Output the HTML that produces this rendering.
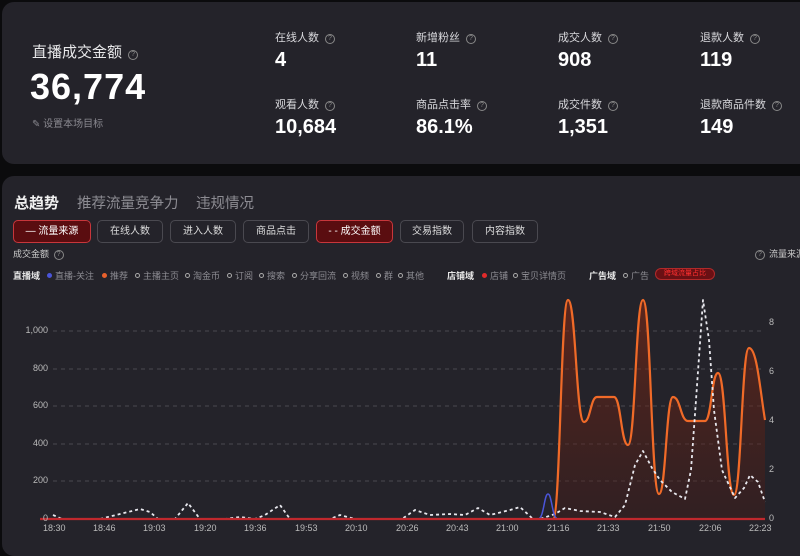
<!DOCTYPE html>
<html><head><meta charset="utf-8"><style>
*{margin:0;padding:0;box-sizing:border-box}
body{width:800px;height:536px;overflow:hidden;background:#0b0b0d;font-family:"Liberation Sans","Noto Sans CJK SC",sans-serif;color:#fff;position:relative}
.card{position:absolute;background:#24232a;border-radius:12px}
.a{position:absolute;white-space:nowrap}
.lbl{font-size:11px;color:#d8d8dc}
.val{font-size:20px;font-weight:bold;color:#fff}
.q{display:inline-block;width:10px;height:10px;border:1px solid #888;border-radius:50%;font-size:7px;line-height:8px;text-align:center;color:#888;margin-left:6px;vertical-align:1px}
.btn{position:absolute;top:220px;height:23px;border:1px solid #4a4950;border-radius:5px;font-size:10px;color:#ddd;text-align:center;line-height:21px;white-space:nowrap}
.btn.on{background:#5a0d10;border-color:#c8363b;color:#fff}
.lg{position:absolute;top:269px;font-size:9px;color:#8d8c93;white-space:nowrap}
.lg b{color:#e8e8e8}
.d{display:inline-block;width:5px;height:5px;border-radius:50%;border:1px solid #aaa;margin-right:3px;vertical-align:1px}
.ax{position:absolute;font-size:9px;color:#bbb}
</style></head><body>
<div class="card" style="left:2px;top:2px;width:810px;height:162px"></div>
<div class="card" style="left:2px;top:176px;width:810px;height:380px"></div>

<div class="a" style="left:32px;top:41px;font-size:15px;color:#e8e8ea">直播成交金额<span class="q">?</span></div>
<div class="a" style="left:30px;top:66px;font-size:36px;font-weight:bold;letter-spacing:1px">36,774</div>
<div class="a" style="left:32px;top:115px;font-size:10px;color:#8a8990">✎ 设置本场目标</div>

<div class="a lbl" style="left:275px;top:29px">在线人数<span class="q">?</span></div>
<div class="a val" style="left:275px;top:49px">4</div>
<div class="a lbl" style="left:275px;top:96px">观看人数<span class="q">?</span></div>
<div class="a val" style="left:275px;top:116px">10,684</div>
<div class="a lbl" style="left:416px;top:29px">新增粉丝<span class="q">?</span></div>
<div class="a val" style="left:416px;top:49px">11</div>
<div class="a lbl" style="left:416px;top:96px">商品点击率<span class="q">?</span></div>
<div class="a val" style="left:416px;top:116px">86.1%</div>
<div class="a lbl" style="left:558px;top:29px">成交人数<span class="q">?</span></div>
<div class="a val" style="left:558px;top:49px">908</div>
<div class="a lbl" style="left:558px;top:96px">成交件数<span class="q">?</span></div>
<div class="a val" style="left:558px;top:116px">1,351</div>
<div class="a lbl" style="left:700px;top:29px">退款人数<span class="q">?</span></div>
<div class="a val" style="left:700px;top:49px">119</div>
<div class="a lbl" style="left:700px;top:96px">退款商品件数<span class="q">?</span></div>
<div class="a val" style="left:700px;top:116px">149</div>

<div class="a" style="left:14px;top:192px;font-size:15px;font-weight:bold;color:#f0f0f0">总趋势</div>
<div class="a" style="left:77px;top:192px;font-size:14.5px;color:#8d8c93">推荐流量竞争力</div>
<div class="a" style="left:196px;top:192px;font-size:14.5px;color:#8d8c93">违规情况</div>

<div class="btn on" style="left:13px;width:78px">— 流量来源</div>
<div class="btn" style="left:97px;width:66px">在线人数</div>
<div class="btn" style="left:170px;width:66px">进入人数</div>
<div class="btn" style="left:243px;width:66px">商品点击</div>
<div class="btn on" style="left:316px;width:77px">- - 成交金额</div>
<div class="btn" style="left:400px;width:64px">交易指数</div>
<div class="btn" style="left:472px;width:66px">内容指数</div>

<div class="a" style="left:13px;top:247px;font-size:9px;color:#ccc">成交金额 <span class="q" style="margin-left:2px">?</span></div>
<div class="a" style="left:755px;top:247px;font-size:9px;color:#ccc"><span class="q" style="margin:0 4px 0 0">?</span>流量来源</div>

<div class="lg" style="left:13px"><b>直播域</b></div>
<div class="lg" style="left:47px"><span class="d" style="background:#4b55d8;border-color:#4b55d8"></span>直播-关注</div>
<div class="lg" style="left:102px"><span class="d" style="background:#e8602c;border-color:#e8602c"></span>推荐</div>
<div class="lg" style="left:135px"><span class="d"></span>主播主页</div>
<div class="lg" style="left:185px"><span class="d"></span>淘金币</div>
<div class="lg" style="left:227px"><span class="d"></span>订阅</div>
<div class="lg" style="left:259px"><span class="d"></span>搜索</div>
<div class="lg" style="left:292px"><span class="d"></span>分享回流</div>
<div class="lg" style="left:343px"><span class="d"></span>视频</div>
<div class="lg" style="left:376px"><span class="d"></span>群</div>
<div class="lg" style="left:398px"><span class="d"></span>其他</div>
<div class="lg" style="left:447px"><b>店铺域</b></div>
<div class="lg" style="left:482px"><span class="d" style="background:#e02a2a;border-color:#e02a2a"></span>店铺</div>
<div class="lg" style="left:513px"><span class="d"></span>宝贝详情页</div>
<div class="lg" style="left:589px"><b>广告域</b></div>
<div class="lg" style="left:623px"><span class="d"></span>广告</div>
<div class="a" style="left:655px;top:268px;width:60px;height:12px;border-radius:6px;background:#6a1014;border:1px solid #b02a2a;font-size:7px;color:#ff3030;text-align:center;line-height:10px">跨域流量占比</div>

<svg class="a" style="left:0;top:0" width="800" height="536">
<defs><linearGradient id="g" x1="0" y1="0" x2="0" y2="1"><stop offset="0" stop-color="#8a2a12" stop-opacity=".55"/><stop offset="1" stop-color="#4a1a14" stop-opacity=".35"/></linearGradient></defs>
<g stroke="#4a4950" stroke-dasharray="4 4" stroke-width="1">
<line x1="53" y1="331" x2="765" y2="331"/><line x1="53" y1="369" x2="765" y2="369"/><line x1="53" y1="406" x2="765" y2="406"/><line x1="53" y1="444" x2="765" y2="444"/><line x1="53" y1="481" x2="765" y2="481"/>
</g>
<path d="M553,519 C560.5,519 560.5,300 568,300 C576,300 576,422 584,422 C590.5,422 590.5,397 597,397 L614,397 C621,397 621,445 628,445 C635.5,445 635.5,300 643,300 C651,300 651,494 659,494 C666,494 666,397 673,397 C680.5,397 680.5,421 688,421 L705,421 C711.5,421 711.5,373 718,373 C726,373 726,495 734,495 C741.5,495 741.5,348 749,348 C757,348 760,390 765,420 L765,519 Z" fill="url(#g)"/>
<path d="M553,519 C560.5,519 560.5,300 568,300 C576,300 576,422 584,422 C590.5,422 590.5,397 597,397 L614,397 C621,397 621,445 628,445 C635.5,445 635.5,300 643,300 C651,300 651,494 659,494 C666,494 666,397 673,397 C680.5,397 680.5,421 688,421 L705,421 C711.5,421 711.5,373 718,373 C726,373 726,495 734,495 C741.5,495 741.5,348 749,348 C757,348 760,390 765,420" fill="none" stroke="#f06a28" stroke-width="2.2"/>
<polyline points="53,515 62,519 100,519 120,514 140,509 150,512 158,519 175,519 188,503 200,519 225,519 240,517 255,519 265,515 280,505 290,519 330,519 340,515 355,519 402,519 415,510 430,515 450,514 465,515 478,508 490,515 510,510 520,507 533,519 540,519 555,514 565,508 580,511 600,512 615,517 625,505 635,465 643,451 652,468 660,480 672,492 685,499 691,470 696,400 703,300 709,340 714,410 722,470 735,498 744,488 750,475 758,482 765,502" fill="none" stroke="#e8e8ee" stroke-width="1.8" stroke-dasharray="3 3" stroke-linejoin="round"/>
<path d="M538,519 C544,519 544,494 548,494 C552,494 552,519 558,519" fill="none" stroke="#4b55d8" stroke-width="1.5"/>
<line x1="40" y1="519" x2="765" y2="519" stroke="#c0282d" stroke-width="2.2"/>
</svg>

<div class="ax" style="left:20px;top:325px;width:28px;text-align:right">1,000</div>
<div class="ax" style="left:20px;top:363px;width:28px;text-align:right">800</div>
<div class="ax" style="left:20px;top:400px;width:28px;text-align:right">600</div>
<div class="ax" style="left:20px;top:438px;width:28px;text-align:right">400</div>
<div class="ax" style="left:20px;top:475px;width:28px;text-align:right">200</div>
<div class="ax" style="left:20px;top:513px;width:28px;text-align:right">0</div>
<div class="ax" style="left:769px;top:317px">8</div>
<div class="ax" style="left:769px;top:366px">6</div>
<div class="ax" style="left:769px;top:415px">4</div>
<div class="ax" style="left:769px;top:464px">2</div>
<div class="ax" style="left:769px;top:513px">0</div>

<div class="ax" style="left:43px;top:523px">18:30</div>
<div class="ax" style="left:93px;top:523px">18:46</div>
<div class="ax" style="left:143px;top:523px">19:03</div>
<div class="ax" style="left:194px;top:523px">19:20</div>
<div class="ax" style="left:244px;top:523px">19:36</div>
<div class="ax" style="left:295px;top:523px">19:53</div>
<div class="ax" style="left:345px;top:523px">20:10</div>
<div class="ax" style="left:396px;top:523px">20:26</div>
<div class="ax" style="left:446px;top:523px">20:43</div>
<div class="ax" style="left:496px;top:523px">21:00</div>
<div class="ax" style="left:547px;top:523px">21:16</div>
<div class="ax" style="left:597px;top:523px">21:33</div>
<div class="ax" style="left:648px;top:523px">21:50</div>
<div class="ax" style="left:699px;top:523px">22:06</div>
<div class="ax" style="left:749px;top:523px">22:23</div>
</body></html>
